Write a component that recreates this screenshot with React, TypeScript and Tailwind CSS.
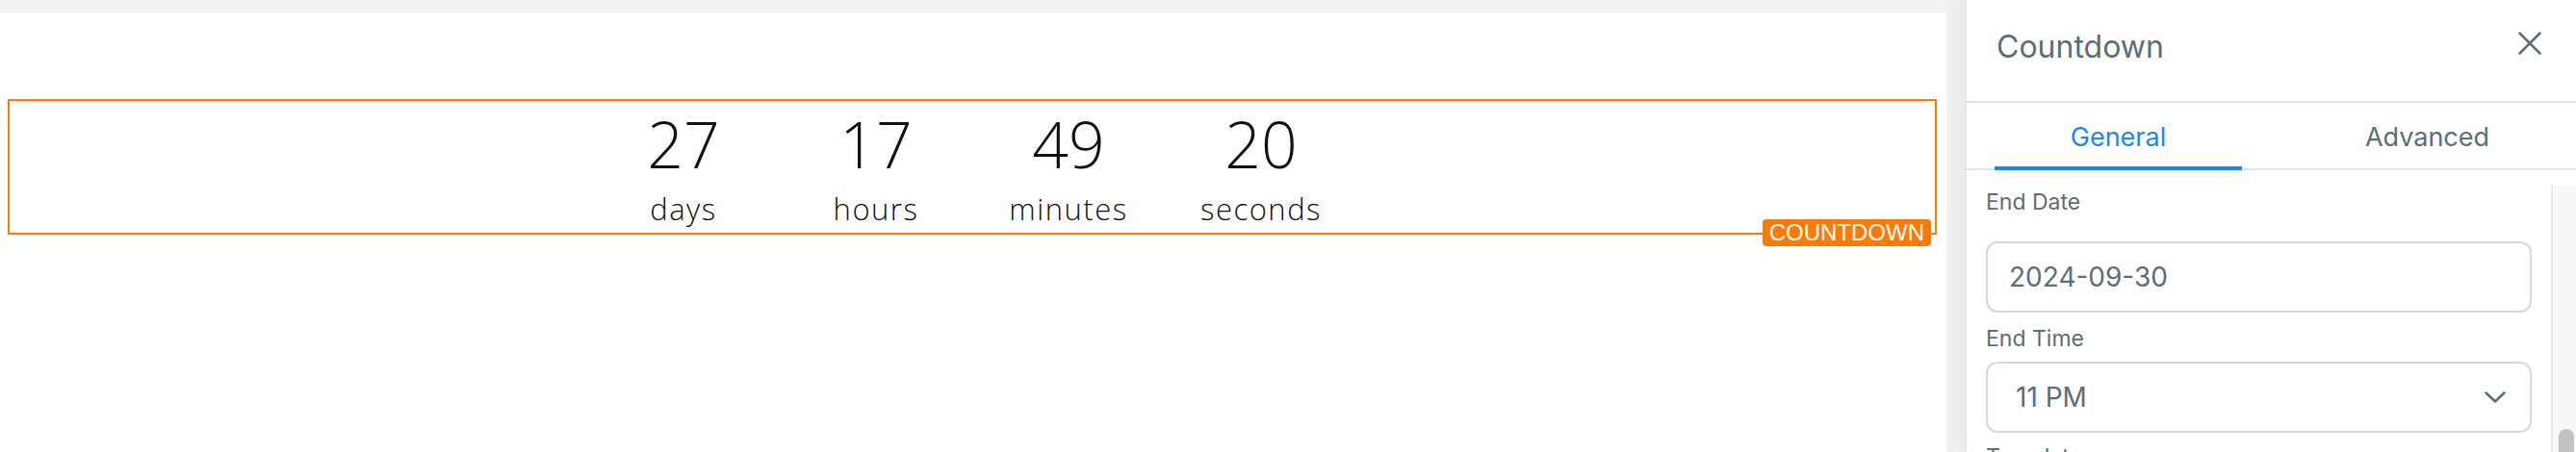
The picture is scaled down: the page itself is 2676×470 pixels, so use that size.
const units = [
  { value: '27', label: 'days' },
  { value: '17', label: 'hours' },
  { value: '49', label: 'minutes' },
  { value: '20', label: 'seconds' },
]

function CloseIcon() {
  return (
    <svg width="24" height="24" viewBox="0 0 24 24" fill="none" stroke="#5e6c75" strokeWidth="2.5" strokeLinecap="round">
      <path d="M1.5 1.5L22.5 22.5M22.5 1.5L1.5 22.5" />
    </svg>
  )
}

function ChevronDown() {
  return (
    <svg width="22" height="12" viewBox="0 0 22 12" fill="none" stroke="#5e6c75" strokeWidth="2.5" strokeLinecap="round" strokeLinejoin="round">
      <polyline points="1.5,1.5 11,10.5 20.5,1.5" />
    </svg>
  )
}

export default function App() {
  return (
    <div className="flex w-[2676px] h-[470px] overflow-hidden bg-[#eff0f2]">
      {/* Canvas */}
      <div className="flex flex-col w-[2022px] shrink-0">
        <div className="h-[13px] shrink-0 bg-[#f2f3f5]" />
        <div className="flex-1 bg-white pt-[90px] pl-[8px] pr-[10px]">
          <div className="relative h-[141px] border-2 border-[#ff7a00] flex justify-center pt-[11px] font-['Open_Sans',sans-serif] text-[#111]">
            {units.map((u) => (
              <div key={u.label} className="w-[200px] flex flex-col items-center">
                <div className="text-[66px] leading-[66px] font-light">{u.value}</div>
                <div className="mt-[20px] text-[31px] leading-[31px] tracking-[1.5px] font-light">{u.label}</div>
              </div>
            ))}
            <div className="absolute right-[4px] bottom-[-14px] h-[28px] px-[7px] rounded-[4px] bg-[#ff7a00] text-white text-[24px] leading-[28px] font-['Liberation_Sans',Arial,sans-serif]">
              COUNTDOWN
            </div>
          </div>
        </div>
      </div>

      {/* Settings panel */}
      <div className="ml-[20px] w-[634px] shrink-0 flex flex-col bg-white border-l border-[#e4e6e9] shadow-[-6px_0_14px_rgba(0,0,0,0.04)] font-['Inter',sans-serif] text-[#5e6c75]">
        <div className="flex shrink-0 h-[107px] border-b-2 border-[#dfe2e6]">
          <div className="pl-[31px] pt-[33px] text-[32px] leading-[32px]">Countdown</div>
          <div className="ml-auto mr-[36px] mt-[33px]">
            <CloseIcon />
          </div>
        </div>

        <div className="flex shrink-0 justify-between h-[70px] pl-[29px] pr-[26px] border-b-2 border-[#dfe2e6]">
          <div className="self-start h-[70px] w-[257px] border-b-4 border-[#1b87f0] flex justify-center pt-[22px] text-[27px] leading-[27px] text-[#1b87f0]">
            General
          </div>
          <div className="self-start h-[70px] w-[257px] flex justify-center pt-[22px] text-[27px] leading-[27px]">
            Advanced
          </div>
        </div>

        <div className="flex flex-1 min-h-0">
          <div className="w-[607px] pl-[20px] pr-[20px]">
            <div className="mt-[22px] text-[23px] leading-[23px]">End Date</div>
            <div className="mt-[29px] h-[74px] border-2 border-[#d5d9de] rounded-[12px] flex items-center pl-[22px] text-[28px]">
              2024-09-30
            </div>
            <div className="mt-[16px] text-[23px] leading-[23px]">End Time</div>
            <div className="mt-[12px] h-[74px] border-2 border-[#d5d9de] rounded-[12px] flex items-center pl-[29px] pr-[25px] text-[28px]">
              <span>11 PM</span>
              <span className="ml-auto flex">
                <ChevronDown />
              </span>
            </div>
            <div className="mt-[14px] text-[23px] leading-[23px]">Template</div>
          </div>
          <div className="mt-[16px] flex-1 border-l-2 border-[#e8e8e8] bg-[#f8f8f8] pl-[6px]">
            <div className="mt-[253px] w-[16px] h-[60px] rounded-full bg-[#c1c1c1]" />
          </div>
        </div>
      </div>
    </div>
  )
}
